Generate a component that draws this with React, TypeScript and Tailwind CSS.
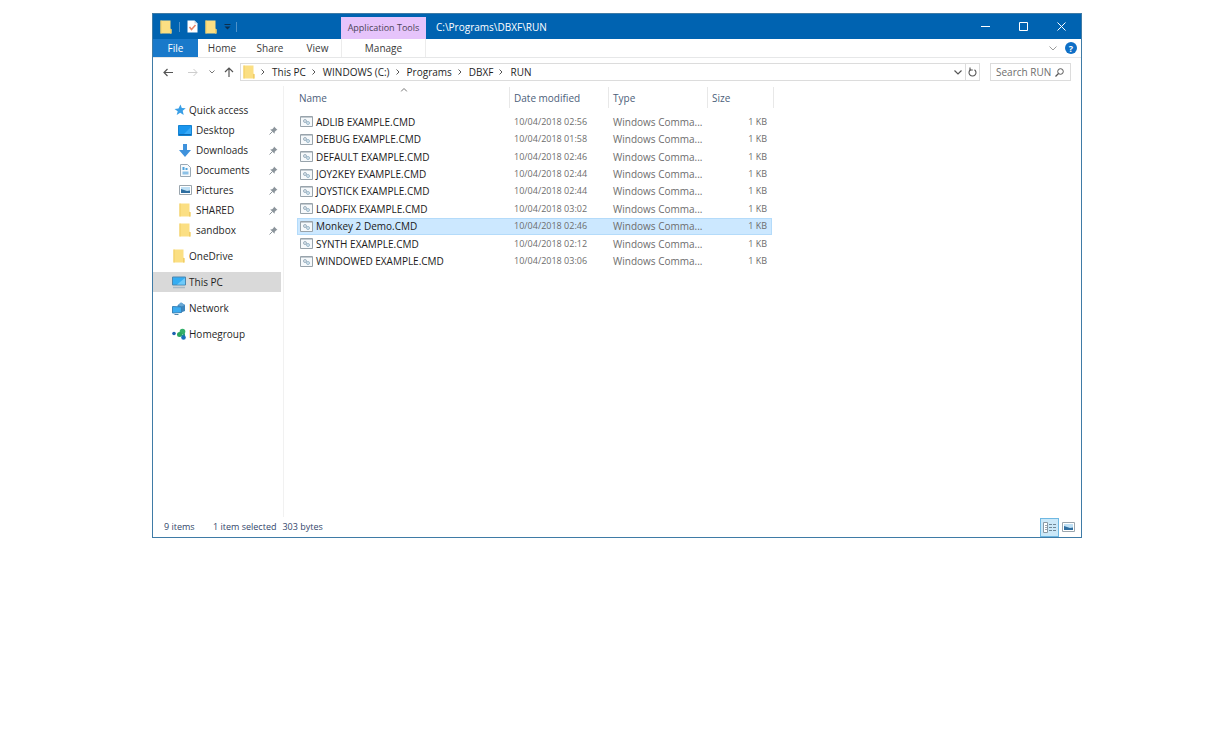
import { useState } from 'react'

const files = [
  { name: 'ADLIB EXAMPLE.CMD', modified: '10/04/2018 02:56' },
  { name: 'DEBUG EXAMPLE.CMD', modified: '10/04/2018 01:58' },
  { name: 'DEFAULT EXAMPLE.CMD', modified: '10/04/2018 02:46' },
  { name: 'JOY2KEY EXAMPLE.CMD', modified: '10/04/2018 02:44' },
  { name: 'JOYSTICK EXAMPLE.CMD', modified: '10/04/2018 02:44' },
  { name: 'LOADFIX EXAMPLE.CMD', modified: '10/04/2018 03:02' },
  { name: 'Monkey 2 Demo.CMD', modified: '10/04/2018 02:46' },
  { name: 'SYNTH EXAMPLE.CMD', modified: '10/04/2018 02:12' },
  { name: 'WINDOWED EXAMPLE.CMD', modified: '10/04/2018 03:06' }
]

const crumbs = ['This PC', 'WINDOWS (C:)', 'Programs', 'DBXF', 'RUN']

function FolderIcon() {
  return (
    <svg width="12" height="14" viewBox="0 0 12 14" className="shrink-0">
      <path d="M0.5 0.5h10v8l1 1v4h-11z" fill="#fbdf83" />
      <path d="M0.5 0.5h1v13h-1z" fill="#f2cd62" />
      <path d="M10 9h1.5v4.5H10z" fill="#f0cd68" />
    </svg>
  )
}

function CheckDocIcon() {
  return (
    <svg width="11" height="13" viewBox="0 0 11 13">
      <path d="M0.5 0.5h7l3 3v9h-10z" fill="#fff" />
      <path d="M7.5 0.5v3h3z" fill="#c9d6e2" />
      <path d="M2.5 7l2 2.5 4-4.5" fill="none" stroke="#e88468" strokeWidth="1.5" />
    </svg>
  )
}

function StarIcon() {
  return (
    <svg width="12" height="12" viewBox="0 0 12 12">
      <path
        d="M6.5 0.5l1.3 3.6 3.9 0.2-3 2.5 1 4.2-3.5-2.2L2.7 11l1-3.7L0.5 5l4-0.6z"
        fill="#3a9fe6"
      />
    </svg>
  )
}

function DesktopIcon() {
  return (
    <svg width="14" height="11" viewBox="0 0 14 11">
      <path d="M0.5 0.5h13v10h-13z" fill="#1a96ee" stroke="#1583d2" />
      <path d="M5 10L13 2v8z" fill="#38aaf8" />
      <path d="M1 9.5h12" stroke="#0d6ab4" />
    </svg>
  )
}

function DownloadIcon() {
  return (
    <svg width="12" height="13" viewBox="0 0 12 13">
      <path d="M4 0h4v6h4l-6 7-6-7h4z" fill="#3f92dc" />
    </svg>
  )
}

function DocumentIcon() {
  return (
    <svg width="11" height="13" viewBox="0 0 11 13">
      <path d="M0.5 0.5h7l3 3v9h-10z" fill="#f7fafc" stroke="#9aa9b5" />
      <path d="M2.5 3h2v3h-2zM5.5 4h2v2h-2z" fill="#4ea3dd" />
      <path d="M2.5 7.5h6v3h-6z" fill="#8cc1e6" />
    </svg>
  )
}

function PictureIcon() {
  return (
    <svg width="13" height="10" viewBox="0 0 13 10">
      <path d="M0.5 0.5h12v9h-12z" fill="#fff" stroke="#9ba6ae" />
      <path d="M2 2h9v6H2z" fill="#bfe0f5" />
      <path d="M2 4l3 1 3 1 3-0.5V8H2z" fill="#2f6ea0" />
    </svg>
  )
}

function ThisPcIcon() {
  return (
    <svg width="14" height="13" viewBox="0 0 14 13">
      <path d="M0.5 1h13v8h-13z" fill="#35adf2" stroke="#4c87b0" />
      <path d="M5 8.5L13 2v6.5z" fill="#6fcaf9" />
      <path d="M1 11.5h12" stroke="#a9b9c5" strokeWidth="1.5" />
    </svg>
  )
}

function NetworkIcon() {
  return (
    <svg width="14" height="13" viewBox="0 0 14 13">
      <path d="M9 0.5l4 2.5v6l-4 1.5-3.500-2v-5z" fill="#3f86bd" />
      <path d="M9 0.5l4 2.5-3.500 1.500L6 3z" fill="#6aa9d6" />
      <path d="M0.5 4.500l9 0.500v5.500l-9 0.500z" fill="#3cacf0" stroke="#3a83b8" />
      <path d="M2.500 12.500h4" stroke="#4f86ab" />
    </svg>
  )
}

function HomegroupIcon() {
  return (
    <svg width="14" height="13" viewBox="0 0 14 13">
      <circle cx="2" cy="5.5" r="1.8" fill="#1c5fb0" />
      <circle cx="10.500" cy="3.500" r="2.800" fill="#35b06a" />
      <circle cx="7.500" cy="6.500" r="2.500" fill="#2aa65c" />
      <path d="M8 8l5-3v4z" fill="#2a9c7a" />
      <circle cx="11.500" cy="9.500" r="2.300" fill="#1a6fbd" />
    </svg>
  )
}

function PinIcon() {
  return (
    <svg width="9" height="9" viewBox="0 0 9 9" className="ml-auto">
      <path d="M5 0.5l3.5 3.5-1.2 0.2-1.5 1.6-0.3 2L1.2 3.5l2-0.3 1.5-1.5z" fill="#8b949b" />
      <path d="M0.5 8.5l3-3" stroke="#8b949b" />
    </svg>
  )
}

function CmdIcon() {
  return (
    <svg width="13" height="11" viewBox="0 0 13 11" className="shrink-0">
      <path d="M0.5 0.5h12v10h-12z" fill="#f6f9fb" stroke="#98a3ab" />
      <path d="M1 1.5h11" stroke="#c4ccd2" />
      <circle cx="5" cy="5" r="1.5" fill="#dbe6ee" stroke="#9fb1be" />
      <circle cx="8" cy="7" r="1.5" fill="#dbe6ee" stroke="#9dbacc" />
    </svg>
  )
}

function Chevron() {
  return (
    <svg width="4" height="6" viewBox="0 0 4 6" className="shrink-0">
      <path d="M0.5 0.5L3 3 0.5 5.5" fill="none" stroke="#555" />
    </svg>
  )
}

const quickAccess = [
  { label: 'Desktop', icon: <DesktopIcon /> },
  { label: 'Downloads', icon: <DownloadIcon /> },
  { label: 'Documents', icon: <DocumentIcon /> },
  { label: 'Pictures', icon: <PictureIcon /> },
  { label: 'SHARED', icon: <FolderIcon /> },
  { label: 'sandbox', icon: <FolderIcon /> }
]

const places = [
  { label: 'OneDrive', icon: <FolderIcon /> },
  { label: 'This PC', icon: <ThisPcIcon /> },
  { label: 'Network', icon: <NetworkIcon /> },
  { label: 'Homegroup', icon: <HomegroupIcon /> }
]

function TitleBar() {
  return (
    <header className="flex h-[25px] bg-[#0063b1] text-white">
      <div className="flex w-[188px] items-center pl-[7px]">
        <FolderIcon />
        <span className="mx-[7px] h-[10px] w-px bg-[#4f92c9]" />
        <button aria-label="Properties">
          <CheckDocIcon />
        </button>
        <button aria-label="New folder" className="ml-[7px]">
          <FolderIcon />
        </button>
        <button aria-label="Customize Quick Access Toolbar" className="ml-[7px]">
          <svg width="7" height="6" viewBox="0 0 7 6">
            <path d="M0.5 0.5h6" stroke="#0b2f4f" />
            <path d="M0.5 2.5h6L3.5 5.5z" fill="#0b2f4f" />
          </svg>
        </button>
        <span className="ml-[5px] h-[10px] w-px bg-[#4f92c9]" />
      </div>
      <div className="mt-[3px] flex w-[85px] items-center justify-center bg-[#e6c4fb] text-[9px] whitespace-nowrap text-[#4c4358]">
        Application Tools
      </div>
      <h1 className="flex flex-1 items-center pl-[10px]">C:\Programs\DBXF\RUN</h1>
      <div className="flex pr-px">
        <button aria-label="Minimize" className="flex w-[38px] items-center justify-center">
          <svg width="9" height="9" viewBox="0 0 9 9">
            <path d="M0 4.5h9" stroke="#fff" />
          </svg>
        </button>
        <button aria-label="Maximize" className="flex w-[38px] items-center justify-center">
          <svg width="9" height="9" viewBox="0 0 9 9">
            <path d="M0.5 0.5h8v8h-8z" fill="none" stroke="#fff" />
          </svg>
        </button>
        <button aria-label="Close" className="flex w-[38px] items-center justify-center">
          <svg width="9" height="9" viewBox="0 0 9 9">
            <path d="M0.5 0.5l8 8M8.5 0.5l-8 8" stroke="#fff" />
          </svg>
        </button>
      </div>
    </header>
  )
}

function Ribbon() {
  return (
    <div className="flex h-[19px] border-b border-[#e6e7e8] text-[#3a3a3a]">
      <button className="w-[45px] bg-[#1979ca] text-white">File</button>
      <button className="w-[48px]">Home</button>
      <button className="w-[48px]">Share</button>
      <button className="w-[47px]">View</button>
      <button className="w-[85px] border-x border-[#ececec]">Manage</button>
      <div className="ml-auto flex items-center gap-2 pr-1">
        <button aria-label="Expand the Ribbon">
          <svg width="8" height="5" viewBox="0 0 8 5">
            <path d="M0.5 0.5L4 4l3.5-3.5" fill="none" stroke="#9a9a9a" />
          </svg>
        </button>
        <button
          aria-label="Help"
          className="flex size-3 items-center justify-center rounded-full bg-[#0f6fc6] text-[9px] leading-none font-bold text-white"
        >
          ?
        </button>
      </div>
    </div>
  )
}

function AddressBar() {
  return (
    <div className="flex h-7 items-center px-[10px] text-[#1f1f1f]">
      <div className="flex w-[77px] items-center">
        <button aria-label="Back">
          <svg width="10" height="9" viewBox="0 0 10 9">
            <path d="M10 4.5H1M4.5 1L1 4.5 4.5 8" fill="none" stroke="#555" strokeWidth="1.2" />
          </svg>
        </button>
        <button aria-label="Forward" className="ml-[15px]">
          <svg width="10" height="9" viewBox="0 0 10 9">
            <path d="M0 4.5h9M5.5 1L9 4.5 5.5 8" fill="none" stroke="#cdcdcd" />
          </svg>
        </button>
        <button aria-label="Recent locations" className="ml-[11px]">
          <svg width="6" height="4" viewBox="0 0 6 4">
            <path d="M0.5 0.5L3 3l2.5-2.5" fill="none" stroke="#777" />
          </svg>
        </button>
        <button aria-label="Up" className="ml-[9px]">
          <svg width="10" height="10" viewBox="0 0 10 10">
            <path d="M5 10V1M1 5l4-4 4 4" fill="none" stroke="#555" strokeWidth="1.2" />
          </svg>
        </button>
      </div>
      <nav aria-label="Path" className="flex h-[18px] flex-1 items-center border border-[#dcdcdc] pl-[2px]">
        <FolderIcon />
        {crumbs.map((crumb) => (
          <span key={crumb} className="flex items-center whitespace-nowrap">
            <span className="mr-[7px] ml-[6px]">
              <Chevron />
            </span>
            <button>{crumb}</button>
          </span>
        ))}
        <button aria-label="Previous locations" className="ml-auto px-[3px]">
          <svg width="8" height="5" viewBox="0 0 8 5">
            <path d="M0.5 0.5L4 4l3.5-3.5" fill="none" stroke="#555" strokeWidth="1.2" />
          </svg>
        </button>
        <button aria-label="Refresh" className="flex h-full items-center border-l border-[#dcdcdc] px-[2px]">
          <svg width="9" height="10" viewBox="0 0 9 10">
            <path d="M6.5 2.7A3.5 3.5 0 1 1 2.5 2.7" fill="none" stroke="#555" strokeWidth="1.1" />
            <path d="M2 0.5v2.5h2.8" fill="none" stroke="#555" strokeWidth="1.1" />
          </svg>
        </button>
      </nav>
      <label className="ml-[10px] flex h-[18px] w-[81px] items-center border border-[#dcdcdc] pr-[6px] pl-[5px]">
        <input
          type="text"
          aria-label="Search RUN"
          placeholder="Search RUN"
          className="w-full min-w-0 outline-none placeholder:text-[#6d6d6d]"
        />
        <svg width="9" height="9" viewBox="0 0 9 9" className="shrink-0">
          <circle cx="5.5" cy="3.5" r="2.8" fill="none" stroke="#555" />
          <path d="M3.5 5.5l-3 3" stroke="#555" strokeWidth="1.2" />
        </svg>
      </label>
    </div>
  )
}

function Sidebar() {
  const [place, setPlace] = useState('This PC')

  return (
    <nav
      aria-label="Navigation pane"
      className="w-[131px] shrink-0 border-r border-[#f1f1f1] pt-[14px] pr-[2px] text-[#1f1f1f]"
    >
      <button className="flex h-5 w-full items-center pl-[21px]">
        <span className="flex w-[15px]">
          <StarIcon />
        </span>
        Quick access
      </button>
      {quickAccess.map((item) => (
        <button key={item.label} className="flex h-5 w-full items-center pr-[3px] pl-[25px]">
          <span className="mr-[4px] flex w-[14px] justify-center">{item.icon}</span>
          {item.label}
          <PinIcon />
        </button>
      ))}
      <div className="mt-[6px] flex flex-col gap-[6px]">
        {places.map((item) => (
          <button
            key={item.label}
            onClick={() => setPlace(item.label)}
            className={`flex h-5 w-full items-center pl-[19px] ${
              place === item.label ? 'bg-[#d9d9d9]' : ''
            }`}
          >
            <span className="mr-[3px] flex w-[14px] justify-center">{item.icon}</span>
            {item.label}
          </button>
        ))}
      </div>
    </nav>
  )
}

function FileList() {
  const [selected, setSelected] = useState('Monkey 2 Demo.CMD')

  return (
    <table className="h-[184px] w-[475px] table-fixed border-collapse text-left">
      <colgroup>
        <col className="w-[213px]" />
        <col className="w-[99px]" />
        <col className="w-[99px]" />
        <col className="w-[64px]" />
      </colgroup>
      <thead>
        <tr className="h-[27px] align-top text-[#4c607a]">
          <th scope="col" className="relative p-0 pt-px font-normal">
            <div className="flex h-[21px] items-center border-r border-[#e8e8e8] pl-[2px]">Name</div>
            <svg
              width="7"
              height="4"
              viewBox="0 0 7 4"
              className="absolute top-[2px] left-1/2 -translate-x-1/2"
            >
              <path d="M0.5 3.5l3-3 3 3" fill="none" stroke="#777" />
            </svg>
          </th>
          <th scope="col" className="p-0 pt-px font-normal">
            <div className="flex h-[21px] items-center border-r border-[#e8e8e8] pl-[4px]">
              Date modified
            </div>
          </th>
          <th scope="col" className="p-0 pt-px font-normal">
            <div className="flex h-[21px] items-center border-r border-[#e8e8e8] pl-[4px]">Type</div>
          </th>
          <th scope="col" className="p-0 pt-px font-normal">
            <div className="flex h-[21px] w-[66px] items-center border-r border-[#e8e8e8] pl-[4px]">
              Size
            </div>
          </th>
        </tr>
      </thead>
      <tbody className="text-[#6d6d6d]">
        {files.map((file) => (
          <tr
            key={file.name}
            onClick={() => setSelected(file.name)}
            className={
              selected === file.name ? 'bg-[#cce8ff] outline outline-[#b4dbfa] -outline-offset-1' : ''
            }
          >
            <td className="p-0 pl-[3px] text-[#1a1a1a]">
              <span className="flex items-center gap-[3px] whitespace-nowrap">
                <CmdIcon />
                {file.name}
              </span>
            </td>
            <td className="p-0 pl-[4px] text-[9px] whitespace-nowrap">{file.modified}</td>
            <td className="p-0 pl-[4px] whitespace-nowrap">Windows Comma...</td>
            <td className="p-0 pr-[5px] text-right text-[9px]">1 KB</td>
          </tr>
        ))}
      </tbody>
    </table>
  )
}

function StatusBar() {
  return (
    <footer className="flex h-5 items-center pr-[6px] pl-[11px] text-[9px] text-[#33476b]">
      <span className="w-[49px]">9 items</span>
      <span>1 item selected</span>
      <span className="ml-[6px]">303 bytes</span>
      <button
        aria-label="Details view"
        aria-pressed="true"
        className="ml-auto flex h-[19px] w-[19px] items-center justify-center border border-[#6fb8e2] bg-[#cbe8f8]"
      >
        <svg width="13" height="11" viewBox="0 0 13 11">
          <path d="M0.5 0.5h4v10h-4z" fill="#fff" stroke="#8a98a3" />
          <path d="M2 3.5h2M2 5.5h2M2 7.5h2" stroke="#9aa7b0" />
          <path d="M6 2.5h3M10 2.5h3M6 5.5h3M10 5.5h3M6 8.5h3M10 8.5h3" stroke="#6f8797" />
        </svg>
      </button>
      <button aria-label="Large icons view" className="ml-[3px]">
        <PictureIcon />
      </button>
    </footer>
  )
}

export default function App() {
  return (
    <div className="min-h-screen bg-white pt-[13px] pr-[150px] pl-[152px] font-['Open_Sans',sans-serif] text-[10px] leading-[14px]">
      <main className="border border-[#3f7ba6]">
        <TitleBar />
        <Ribbon />
        <AddressBar />
        <div className="flex min-h-[431px]">
          <Sidebar />
          <div className="flex-1 pl-[13px]">
            <FileList />
          </div>
        </div>
        <StatusBar />
      </main>
    </div>
  )
}
